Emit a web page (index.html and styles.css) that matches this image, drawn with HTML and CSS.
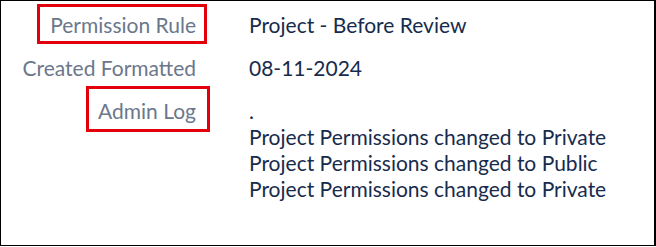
FILE: index.html
```html
<!DOCTYPE html>
<html>
<head>
<meta charset="utf-8">
<link rel="stylesheet" href="styles.css">
</head>
<body>
<div class="frame">
  <div class="fields">
    <div class="label"><span class="mark mark-1">Permission Rule</span></div>
    <div class="value">Project - Before Review</div>
    <div class="label">Created Formatted</div>
    <div class="value">08-11-2024</div>
    <div class="label"><span class="mark mark-2">Admin Log</span></div>
    <div class="value log">
      <div>.</div>
      <div>Project Permissions changed to Private</div>
      <div>Project Permissions changed to Public</div>
      <div>Project Permissions changed to Private</div>
    </div>
  </div>
</div>
</body>
</html>
```

FILE: styles.css
```css
html, body {
  margin: 0;
  padding: 0;
  background: #ffffff;
}
.frame {
  box-sizing: border-box;
  width: 656px;
  height: 246px;
  border-top: 1px solid #000;
  border-left: 1px solid #000;
  border-right: 2px solid #000;
  border-bottom: 1px solid #000;
  padding-top: 11px;
  font-family: "Lato", "Open Sans", sans-serif;
  font-size: 21px;
  line-height: 26px;
}
.fields {
  display: grid;
  grid-template-columns: 195px 1fr;
  column-gap: 53px;
  row-gap: 17px;
}
.label {
  text-align: right;
  color: #6b778c;
}
.value {
  color: #172b4d;
}
.mark {
  position: relative;
  display: inline-block;
}
.mark::after {
  content: "";
  position: absolute;
  border: 3px solid #e3000b;
}
.mark-1::after {
  left: -13px;
  right: -11px;
  top: -8px;
  bottom: -6px;
}
.mark-2::after {
  left: -12px;
  right: -14px;
  top: -12px;
  bottom: -8px;
}
```
